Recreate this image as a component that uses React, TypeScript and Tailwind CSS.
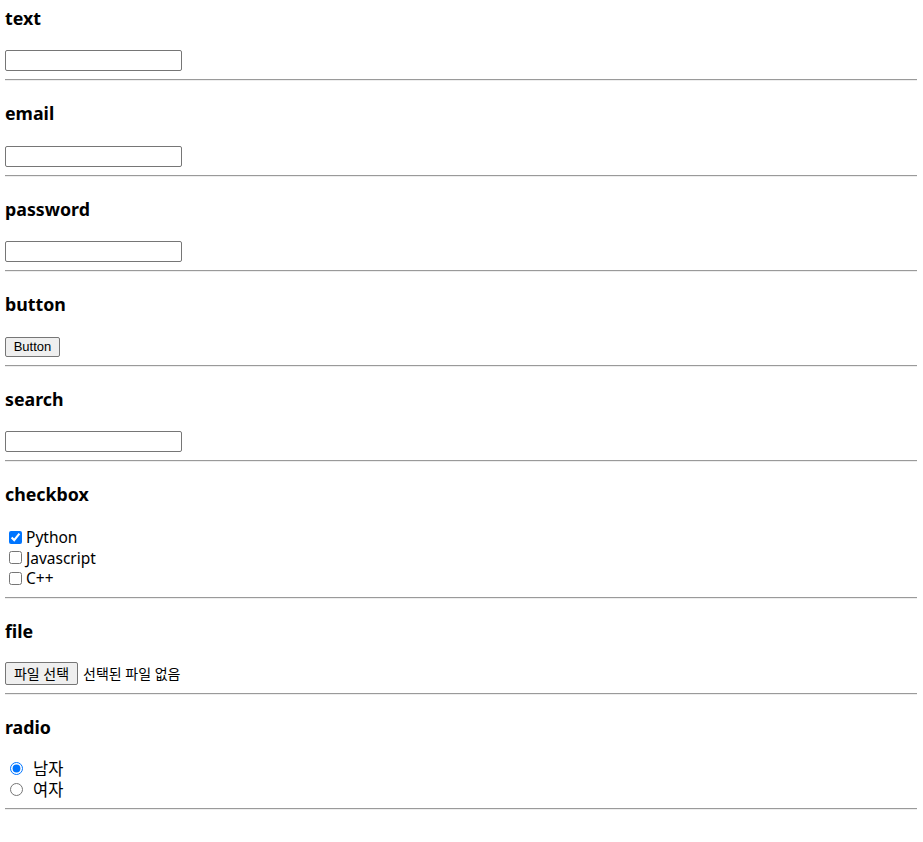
const font = { fontFamily: '"Noto Sans", "Noto Sans CJK KR", sans-serif' }

function Heading({ children }: { children: string }) {
  return (
    <h3 className="h-[24px] text-[17.8px] font-bold leading-[24px] text-black">
      {children}
    </h3>
  )
}

function Divider() {
  return <hr className="border-0 border-t-[1px] border-b-[1px] border-t-[#9a9a9a] border-b-[#eeeeee]" />
}

function TextBox({ type }: { type: string }) {
  return (
    <input
      type={type}
      className="block h-[21px] w-[177px] rounded-[2px] border border-[#767676] bg-white px-[2px] text-[13px] outline-none"
    />
  )
}

function Section({
  title,
  first,
  gap = 'mt-[20px]',
  children,
}: {
  title: string
  first?: boolean
  gap?: string
  children: React.ReactNode
}) {
  return (
    <section className={first ? 'pt-[6px]' : 'pt-[20px]'}>
      <Heading>{title}</Heading>
      <div className={gap}>{children}</div>
      <div className="h-[8px]" />
      <Divider />
    </section>
  )
}

export default function App() {
  return (
    <div className="min-h-screen bg-white px-[5px] pr-[6px] text-black" style={font}>
      <Section title="text" first>
        <TextBox type="text" />
      </Section>

      <Section title="email" gap="mt-[21px]">
        <TextBox type="email" />
      </Section>

      <Section title="password" gap="mt-[20px]">
        <TextBox type="password" />
      </Section>

      <Section title="button" gap="mt-[21px]">
        <button
          type="button"
          className="block h-[20px] w-[55px] rounded-[2px] border border-[#767676] bg-[#efefef] text-[13px] leading-[18px]"
          style={{ fontFamily: '"Liberation Sans", Arial, sans-serif' }}
        >
          Button
        </button>
      </Section>

      <Section title="search" gap="mt-[20px]">
        <TextBox type="search" />
      </Section>

      <Section title="checkbox" gap="mt-[21px]">
        <div className="text-[15.5px] leading-[20.5px]">
          {[
            ['Python', true],
            ['Javascript', false],
            ['C++', false],
          ].map(([label, checked]) => (
            <label key={label as string} className="flex h-[20.5px] items-center">
              <input
                type="checkbox"
                defaultChecked={checked as boolean}
                className="ml-[4px] mr-[4px] h-[13px] w-[13px]"
              />
              <span>{label as string}</span>
            </label>
          ))}
        </div>
      </Section>

      <Section title="file" gap="mt-[19px]">
        <div className="flex items-center text-[14px]">
          <span className="flex h-[23px] w-[73px] items-center justify-center rounded-[2px] border border-[#767676] bg-[#efefef]">
            파일 선택
          </span>
          <span className="ml-[5px]">선택된 파일 없음</span>
        </div>
      </Section>

      <Section title="radio" gap="mt-[19px]">
        <div className="text-[16.5px] leading-[21px]">
          {[
            ['남자', true],
            ['여자', false],
          ].map(([label, checked]) => (
            <label key={label as string} className="flex h-[21px] items-center">
              <input
                type="radio"
                name="gender"
                defaultChecked={checked as boolean}
                className="ml-[5px] mr-[3px] h-[13px] w-[13px]"
              />
              <span className="ml-[7px]">{label as string}</span>
            </label>
          ))}
        </div>
      </Section>
    </div>
  )
}
